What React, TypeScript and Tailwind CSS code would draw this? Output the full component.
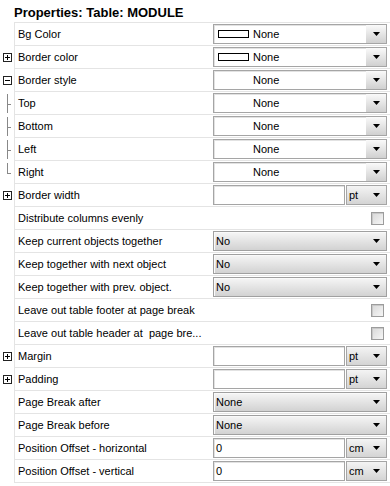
import React from "react";

type Kind =
  | { t: "swatch" }
  | { t: "center" }
  | { t: "gray"; v: string }
  | { t: "unit"; v: string; u: string }
  | { t: "check" };

type Row = { label: string; gutter?: "plus" | "minus" | "mid" | "end"; kind: Kind };

const rows: Row[] = [
  { label: "Bg Color", kind: { t: "swatch" } },
  { label: "Border color", gutter: "plus", kind: { t: "swatch" } },
  { label: "Border style", gutter: "minus", kind: { t: "center" } },
  { label: "Top", gutter: "mid", kind: { t: "center" } },
  { label: "Bottom", gutter: "mid", kind: { t: "center" } },
  { label: "Left", gutter: "mid", kind: { t: "center" } },
  { label: "Right", gutter: "end", kind: { t: "center" } },
  { label: "Border width", gutter: "plus", kind: { t: "unit", v: "", u: "pt" } },
  { label: "Distribute columns evenly", kind: { t: "check" } },
  { label: "Keep current objects together", kind: { t: "gray", v: "No" } },
  { label: "Keep together with next object", kind: { t: "gray", v: "No" } },
  { label: "Keep together with prev. object.", kind: { t: "gray", v: "No" } },
  { label: "Leave out table footer at page break", kind: { t: "check" } },
  { label: "Leave out table header at  page bre...", kind: { t: "check" } },
  { label: "Margin", gutter: "plus", kind: { t: "unit", v: "", u: "pt" } },
  { label: "Padding", gutter: "plus", kind: { t: "unit", v: "", u: "pt" } },
  { label: "Page Break after", kind: { t: "gray", v: "None" } },
  { label: "Page Break before", kind: { t: "gray", v: "None" } },
  { label: "Position Offset - horizontal", kind: { t: "unit", v: "0", u: "cm" } },
  { label: "Position Offset - vertical", kind: { t: "unit", v: "0", u: "cm" } },
];

function Arrow() {
  return (
    <svg width="7" height="4" viewBox="0 0 7 4">
      <polygon points="0,0 7,0 3.5,4" fill="#000" />
    </svg>
  );
}

function Gutter({ g }: { g?: Row["gutter"] }) {
  if (g === "plus" || g === "minus") {
    return (
      <svg width="9" height="9" viewBox="0 0 9 9">
        <rect x="0.5" y="0.5" width="8" height="8" fill="#fff" stroke="#222" />
        <line x1="2" y1="4.5" x2="7" y2="4.5" stroke="#000" />
        {g === "plus" && <line x1="4.5" y1="2" x2="4.5" y2="7" stroke="#000" />}
      </svg>
    );
  }
  if (g === "mid" || g === "end") {
    return (
      <svg width="14" height="22" viewBox="0 0 14 22">
        <line x1="7.5" y1="1" x2="7.5" y2={g === "mid" ? 20 : 12} stroke="#888" />
        <line x1="7.5" y1="11.5" x2="11" y2="11.5" stroke="#888" />
      </svg>
    );
  }
  return null;
}

function Value({ k }: { k: Kind }) {
  if (k.t === "check") {
    return (
      <div className="flex w-full justify-end pr-[3px]">
        <div className="h-[13px] w-[13px] border border-[#9c9c9c] bg-gradient-to-br from-[#d8d8d8] to-[#f6f6f6] shadow-[inset_1px_1px_0_#c8c8c8]" />
      </div>
    );
  }
  if (k.t === "unit") {
    return (
      <div className="flex h-[20px] w-full gap-[1px]">
        <div className="flex w-[132px] items-center border border-[#a5a5a5] bg-white pl-[2px] shadow-[inset_1px_1px_0_#e2e2e2]">
          {k.v}
        </div>
        <div className="flex flex-1 items-center justify-between border border-[#a5a5a5] bg-gradient-to-b from-[#f4f4f4] to-[#d4d4d4] pl-[2px] pr-[6px]">
          <span>{k.u}</span>
          <Arrow />
        </div>
      </div>
    );
  }
  if (k.t === "gray") {
    return (
      <div className="flex h-[20px] w-full items-center justify-between border border-[#a0a0a0] bg-gradient-to-b from-[#f6f6f6] to-[#d2d2d2] pl-[2px] pr-[6px] shadow-[inset_1px_1px_0_#fafafa]">
        <span>{k.v}</span>
        <Arrow />
      </div>
    );
  }
  return (
    <div className="flex h-[20px] w-full border border-[#a5a5a5] bg-white shadow-[inset_1px_1px_0_#e2e2e2]">
      <div className="flex flex-1 items-center gap-[4px] pl-[4px]">
        {k.t === "swatch" ? (
          <div className="h-[8px] w-[31px] border border-black bg-white" />
        ) : (
          <div className="w-[31px]" />
        )}
        <span>None</span>
      </div>
      <div className="flex w-[20px] items-center justify-center bg-gradient-to-b from-[#fafafa] to-[#d0d0d0]">
        <Arrow />
      </div>
    </div>
  );
}

export default function App() {
  return (
    <div className="h-[486px] w-[390px] overflow-hidden bg-white font-['Liberation_Sans',Arial,sans-serif] text-black">
      <div className="h-[22px] pl-[14px] pt-[5px] text-[13px] font-bold leading-[15px]">
        Properties: Table: MODULE
      </div>
      <div className="ml-[14px] border-t border-[#e4e4e4]" />
      {rows.map((r) => (
        <div key={r.label} className="flex h-[23px]">
          <div className="flex w-[14px] items-center justify-center">
            <Gutter g={r.gutter} />
          </div>
          <div className="flex flex-1 border-b border-l border-[#e4e4e4] text-[11px] leading-[13px]">
            <div className="flex w-[190px] items-center whitespace-pre pl-[3px]">{r.label}</div>
            <div className="flex flex-1 items-center pl-[8px] pr-[3px]">
              <Value k={r.kind} />
            </div>
          </div>
        </div>
      ))}
    </div>
  );
}
